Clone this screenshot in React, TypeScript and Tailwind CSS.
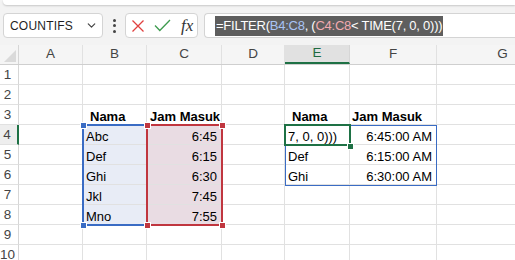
import React from 'react';
import { ChevronDown } from 'lucide-react';

const COLS = ['A', 'B', 'C', 'D', 'E', 'F', 'G'];
const WIDTHS = ['w-[64px]', 'w-[64px]', 'w-[75px]', 'w-[63px]', 'w-[65px]', 'w-[87px]', 'w-[132px]'];

type Cell = { text: string; bold?: boolean; right?: boolean; pad?: string; bg?: string };

const names = ['Abc', 'Def', 'Ghi', 'Jkl', 'Mno'];
const times = ['6:45', '6:15', '6:30', '7:45', '7:55'];
const spill = [
  ['7, 0, 0)))', '6:45:00 AM'],
  ['Def', '6:15:00 AM'],
  ['Ghi', '6:30:00 AM'],
];

const cellFor = (row: number, col: number): Cell | null => {
  if (row === 3) {
    if (col === 1) return { text: 'Nama', bold: true, pad: 'pl-[7px]' };
    if (col === 2) return { text: 'Jam Masuk', bold: true, pad: 'pl-[3px]' };
    if (col === 4) return { text: 'Nama', bold: true, pad: 'pl-[7px]' };
    if (col === 5) return { text: 'Jam Masuk', bold: true, pad: 'pl-[2px]' };
  }
  if (row >= 4 && row <= 8) {
    const i = row - 4;
    if (col === 1) return { text: names[i], pad: 'pl-[3px]', bg: 'bg-[#e8ecf6]' };
    if (col === 2) return { text: times[i], right: true, pad: 'pr-[4px]', bg: 'bg-[#e9dce3]' };
  }
  if (row >= 4 && row <= 6) {
    const s = spill[row - 4];
    if (col === 4) return { text: s[0], pad: 'pl-[3px]' };
    if (col === 5) return { text: s[1], right: true, pad: 'pr-[4px]' };
  }
  return null;
};

const Handle = ({ pos, color }: { pos: string; color: string }) => (
  <div className={`absolute w-[7px] h-[7px] border border-white ${color} ${pos}`} />
);

export default function App() {
  const rows = Array.from({ length: 10 }, (_, i) => i + 1);

  return (
    <div className="w-[515px] h-[260px] overflow-hidden bg-white font-['Liberation_Sans',sans-serif] text-[13px] text-black">
      {/* ribbon edge + formula bar */}
      <div className="h-[45px] bg-[#f3f3f3] flex flex-col">
        <div className="h-[5px] ml-[3px] bg-white rounded-bl-[4px] shadow-[0_1px_2px_rgba(0,0,0,0.18)]" />
        <div className="flex items-center h-[25px] mt-[8px] pl-[3px]">
          <div className="w-[100px] h-[25px] bg-white border border-[#d4d4d4] rounded-[4px] flex items-center pl-[6px] pr-[4px]">
            <span className="flex-1 text-[12px] text-[#1f1f1f] tracking-[0.2px]">COUNTIFS</span>
            <ChevronDown className="w-[13px] h-[13px] text-[#444]" strokeWidth={2.2} />
          </div>
          <div className="w-[22px] flex flex-col items-center gap-[2.5px]">
            <span className="w-[3px] h-[3px] bg-[#444] rounded-full" />
            <span className="w-[3px] h-[3px] bg-[#444] rounded-full" />
            <span className="w-[3px] h-[3px] bg-[#444] rounded-full" />
          </div>
          <div className="w-[73px] h-[25px] bg-white border border-[#d4d4d4] rounded-[4px] flex items-center pl-[5px] gap-[9px]">
            <svg width="14" height="14" viewBox="0 0 14 14">
              <path d="M1.5 1.5 L12.5 12.5 M12.5 1.5 L1.5 12.5" stroke="#e0403f" strokeWidth="1.3" fill="none" />
            </svg>
            <svg width="17" height="13" viewBox="0 0 17 13">
              <path d="M1 6.5 L5.8 11.5 L16 1" stroke="#3e9b4f" strokeWidth="1.3" fill="none" />
            </svg>
            <span className="font-['Liberation_Serif',serif] italic text-[17px] leading-none text-[#333] ml-[1px]">fx</span>
          </div>
          <div className="flex-1 h-[25px] ml-[6px] bg-white border border-r-0 border-[#d4d4d4] rounded-l-[4px] flex items-center pl-[10px]">
            <span className="bg-[#5e5e5e] text-white text-[13px] tracking-[-0.25px] leading-[20px] px-[1px]">
              =FILTER(<span className="text-[#a9c4f5]">B4:C8</span>, (<span className="text-[#f2aab0]">C4:C8</span>&lt; TIME(7, 0, 0)))
            </span>
          </div>
        </div>
      </div>

      {/* grid */}
      <div className="relative">
        {/* column headers */}
        <div className="flex h-[20px] bg-[#f5f5f5] border-b border-[#cfcfcf]">
          <div className="w-[19px] shrink-0 relative border-r border-[#d6d6d6]">
            <svg className="absolute right-[2px] bottom-[2px]" width="12" height="12" viewBox="0 0 12 12">
              <path d="M12 0 L12 12 L0 12 Z" fill="#dadada" />
            </svg>
          </div>
          {COLS.map((c, i) => (
            <div
              key={c}
              className={`${WIDTHS[i]} shrink-0 flex items-center justify-center text-[13.5px] ${
                c === 'E'
                  ? 'bg-[#e1e1e1] text-[#1e6b41] border-b-2 border-b-[#1e7145] border-r border-r-[#d6d6d6]'
                  : 'text-[#444] border-r border-[#e1e1e1]'
              }`}
            >
              {c}
            </div>
          ))}
        </div>

        {rows.map(r => (
          <div key={r} className="flex h-[20px]">
            <div
              className={`w-[19px] shrink-0 text-center pr-[3px] text-[13.5px] leading-[20px] text-[#444] border-b border-[#e1e1e1] ${
                r === 4 ? 'border-r-2 border-r-[#1e7145] bg-[#eeeeee] text-[#1e6b41]' : 'border-r border-r-[#d6d6d6]'
              }`}
            >
              {r}
            </div>
            {COLS.map((c, i) => {
              const cell = cellFor(r, i);
              return (
                <div
                  key={c}
                  className={`${WIDTHS[i]} shrink-0 border-r border-b border-[#e1e1e1] whitespace-nowrap leading-[23px] ${
                    cell?.bg ?? ''
                  } ${cell?.pad ?? ''} ${cell?.right ? 'text-right' : ''} ${cell?.bold ? 'font-bold' : ''}`}
                >
                  {cell?.text}
                </div>
              );
            })}
          </div>
        ))}

        {/* reference ranges */}
        <div className="absolute left-[82px] top-[79px] w-[66px] h-[102px] border-2 border-r-0 border-[#3a6cc4]" />
        <div className="absolute left-[146px] top-[79px] w-[77px] h-[102px] border-2 border-[#c0363f]" />
        <Handle pos="left-[80px] top-[77px]" color="bg-[#3a6cc4]" />
        <Handle pos="left-[80px] top-[177px]" color="bg-[#3a6cc4]" />
        <Handle pos="left-[144px] top-[77px]" color="bg-[#c0363f]" />
        <Handle pos="left-[219px] top-[77px]" color="bg-[#c0363f]" />
        <Handle pos="left-[144px] top-[177px]" color="bg-[#c0363f]" />
        <Handle pos="left-[219px] top-[177px]" color="bg-[#c0363f]" />

        {/* spill range + active cell */}
        <div className="absolute left-[285px] top-[80px] w-[152px] h-[61px] border border-[#3a6cc4]" />
        <div className="absolute left-[284px] top-[79px] w-[67px] h-[22px] border-2 border-[#1e7145]" />
        <Handle pos="left-[347px] top-[98px]" color="bg-[#1e7145]" />
      </div>
    </div>
  );
}
